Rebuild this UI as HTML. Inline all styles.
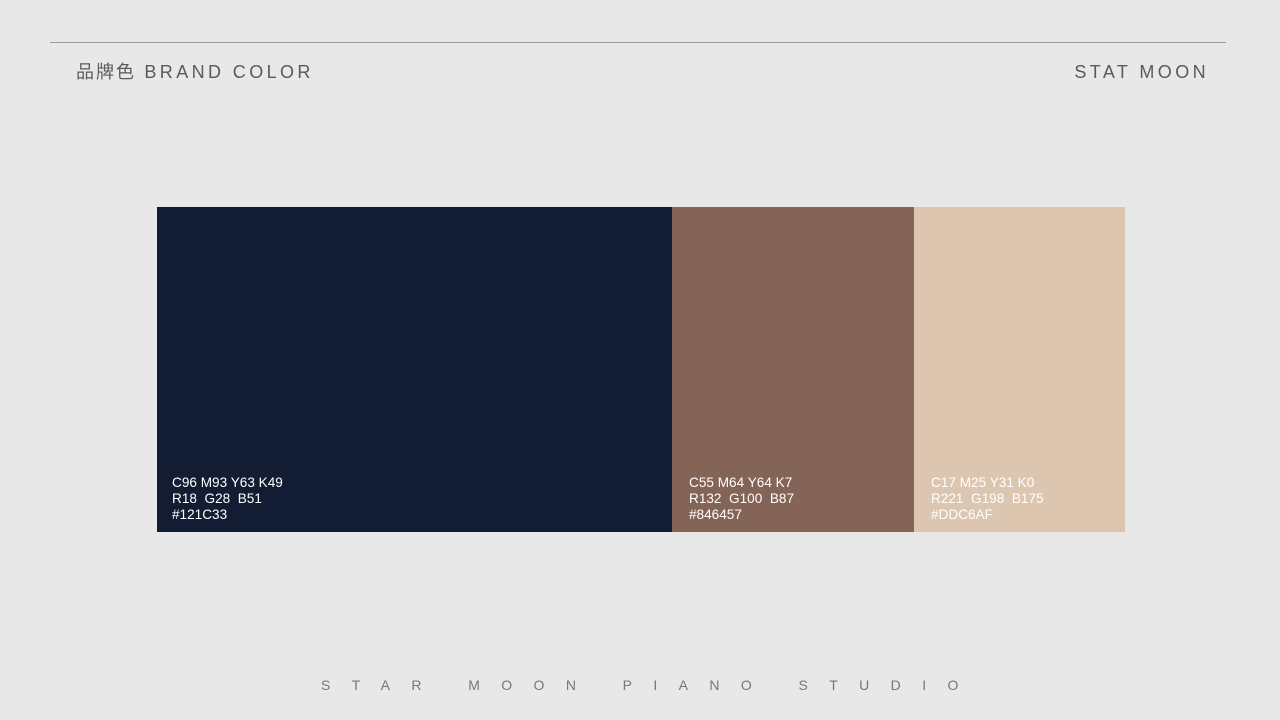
<!DOCTYPE html>
<html><head><meta charset="utf-8"><style>
*{margin:0;padding:0;box-sizing:border-box}
body{width:1280px;height:720px;background:#e8e8e8;position:relative;overflow:hidden;font-family:"Liberation Sans","Noto Sans CJK SC",sans-serif}
.line{position:absolute;left:50px;top:42px;width:1176px;height:1px;background:#9a9a9a}
.h{position:absolute;top:61px;font-size:18px;letter-spacing:3.4px;color:#5a5a5a;line-height:22px}
.b{position:absolute;top:207px;height:325px}
.t{position:absolute;left:15px;top:268px;font-size:13.6px;line-height:16px;color:#fff;white-space:pre}
.foot{position:absolute;left:321px;top:677px;font-size:14px;letter-spacing:21.4px;color:#777;white-space:pre;line-height:16px}
</style></head><body>
<div class="line"></div>
<div class="h" style="left:76px"><span style="letter-spacing:2px">品牌色</span> BRAND COLOR</div>
<div class="h" style="right:71px">STAT MOON</div>
<div class="b" style="left:157px;width:515px;background:#121c33"><div class="t">C96 M93 Y63 K49
R18  G28  B51
#121C33</div></div>
<div class="b" style="left:672px;width:242px;background:#846457"><div class="t" style="left:17px">C55 M64 Y64 K7
R132  G100  B87
#846457</div></div>
<div class="b" style="left:914px;width:211px;background:#ddc6af"><div class="t" style="left:17px">C17 M25 Y31 K0
R221  G198  B175
#DDC6AF</div></div>
<div class="foot">STAR MOON PIANO STUDIO</div>
</body></html>
